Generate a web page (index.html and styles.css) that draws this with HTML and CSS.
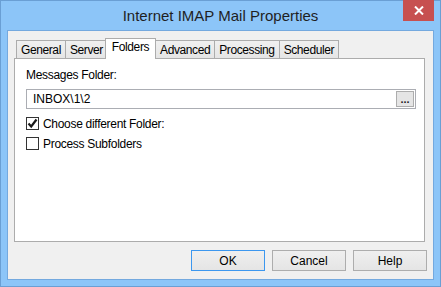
FILE: index.html
```html
<!DOCTYPE html>
<html lang="en">
<head>
    <meta charset="UTF-8">
    <title>Internet IMAP Mail Properties</title>
    <link rel="stylesheet" href="styles.css">
</head>
<body>
    <div class="window">
        <div class="titlebar">
            <span></span>
            <div class="title">Internet IMAP Mail Properties</div>
            <button class="close-btn" aria-label="Close">
                <svg width="10" height="9" viewBox="0 0 10 9">
                    <path d="M1 0.5 L9 8.5 M9 0.5 L1 8.5" stroke="#fff" stroke-width="2"/>
                </svg>
            </button>
        </div>

        <div class="client">
            <!-- tab strip -->
            <div class="tabs">
                <div class="tab">General</div>
                <div class="tab">Server</div>
                <div class="tab active">Folders</div>
                <div class="tab">Advanced</div>
                <div class="tab">Processing</div>
                <div class="tab">Scheduler</div>
            </div>

            <div class="panel">
                <label class="field-label" for="folder">Messages Folder:</label>
                <div class="folder-box">
                    <input type="text" id="folder" value="INBOX\1\2">
                    <button class="browse-btn">...</button>
                </div>

                <label class="check-row">
                    <span class="checkbox checked">
                        <svg width="11" height="11" viewBox="0 0 11 11">
                            <path d="M1.5 5.5 L4.2 8.5 L9.5 1.5" fill="none" stroke="#1a1a1a" stroke-width="2.2"/>
                        </svg>
                    </span>
                    Choose different Folder:
                </label>
                <label class="check-row">
                    <span class="checkbox"></span>
                    Process Subfolders
                </label>
            </div>

            <div class="buttons">
                <button class="dlg-btn default">OK</button>
                <button class="dlg-btn">Cancel</button>
                <button class="dlg-btn">Help</button>
            </div>
        </div>
    </div>
</body>
</html>
```

FILE: styles.css
```css
* {
    margin: 0;
    padding: 0;
    box-sizing: border-box;
}

body {
    font-family: 'Liberation Sans', Arial, sans-serif;
    font-size: 12px;
    color: #000;
    background: #fff;
}

.window {
    width: 441px;
    height: 287px;
    background: #8cc5f8;
    border: 1px solid #6a9fd4;
    padding: 0 6px 6px;
    display: flex;
    flex-direction: column;
}

.titlebar {
    height: 29px;
    display: grid;
    grid-template-columns: 1fr auto 1fr;
    align-items: start;
}

.title {
    font-size: 15px;
    color: #1f1f1f;
    padding-top: 6px;
}

.close-btn {
    justify-self: end;
    width: 31px;
    height: 21px;
    margin-top: -1px;
    background: #c75050;
    border: none;
    display: flex;
    align-items: center;
    justify-content: center;
}

.client {
    flex: 1;
    background: #f0f0f0;
    border: 1px solid #74a9df;
    padding: 7px 8px 8px 6px;
    display: flex;
    flex-direction: column;
}

.tabs {
    display: flex;
    align-items: flex-end;
    padding-left: 2px;
    height: 20px;
    position: relative;
    z-index: 1;
    letter-spacing: -0.4px;
}

.tab {
    height: 18px;
    padding: 1px 4px 0;
    margin-right: -1px;
    border: 1px solid #acacac;
    border-bottom: none;
    background: linear-gradient(#f0f0f0, #e5e5e5);
    line-height: 16px;
}

.tab.active {
    height: 21px;
    margin: 0 -1px -1px -2px;
    padding: 0 6px;
    background: #fff;
    line-height: 17px;
}

.panel {
    height: 184px;
    background: #fff;
    border: 1px solid #acacac;
    padding: 9px 8px 0 11px;
    display: flex;
    flex-direction: column;
}

.field-label {
    line-height: 14px;
    margin-bottom: 7px;
    letter-spacing: -0.3px;
}

.folder-box {
    height: 20px;
    border: 1px solid #abadb3;
    display: flex;
    align-items: center;
    padding: 1px;
    margin-bottom: 8px;
}

.folder-box input {
    flex: 1;
    border: none;
    outline: none;
    font: inherit;
    padding-left: 5px;
    background: #fff;
}

.browse-btn {
    width: 18px;
    height: 16px;
    background: #e5e5e5;
    border: 1px solid #adadad;
    font: inherit;
    font-size: 11px;
    line-height: 8px;
    font-weight: bold;
    color: #222;
}

.check-row {
    display: flex;
    align-items: center;
    gap: 4px;
    height: 13px;
    margin-bottom: 7px;
    letter-spacing: -0.3px;
}

.checkbox {
    width: 13px;
    height: 13px;
    border: 1px solid #333;
    background: #fff;
    display: flex;
    align-items: center;
    justify-content: center;
}

.buttons {
    display: flex;
    justify-content: flex-end;
    gap: 7px;
    margin-top: 8px;
    margin-right: -2px;
}

.dlg-btn {
    width: 74px;
    height: 21px;
    font: inherit;
    background: linear-gradient(#efefef, #e5e5e5);
    border: 1px solid #adadad;
    color: #000;
}

.dlg-btn.default {
    border-color: #3c97ef;
}
```
